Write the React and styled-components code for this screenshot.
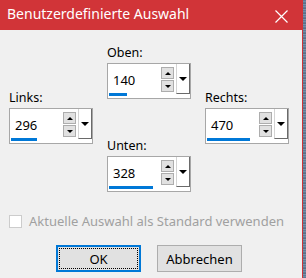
import React from 'react';
import styled, { createGlobalStyle } from 'styled-components';

let GlobalStyle = createGlobalStyle`
  html, body {
    margin: 0;
    padding: 0;
    height: 100%;
    overflow: hidden;
    background: #f0f0f0;
  }
  #root {
    height: 100%;
  }
`;

let Screen = styled.div`
  display: flex;
  height: 100%;
  font-family: "Noto Sans", "Open Sans", sans-serif;
`;

let Dialog = styled.div`
  width: 302px;
  border-right: 1px solid #d13438;
  background: #f0f0f0;
  display: flex;
  flex-direction: column;
`;

let Backdrop = styled.div`
  flex: 1;
  background: repeating-linear-gradient(
    180deg,
    #55708c 0px,
    #7b95b0 2px,
    #4a5e74 3px,
    #8aa2ba 5px
  );
`;

let TitleBar = styled.div`
  height: 30px;
  background: #d13438;
  color: white;
  display: flex;
  justify-content: space-between;
  align-items: flex-start;
  padding: 4px 0 0 7px;
  box-sizing: border-box;
`;

let Title = styled.div`
  font-size: 14px;
  line-height: 19px;
`;

let Close = styled.div`
  width: 42px;
  height: 20px;
  display: flex;
  justify-content: center;
  align-items: center;
  margin-top: 2px;
`;

let Body = styled.div`
  padding: 15px 0 0 9px;
  display: flex;
  flex-direction: column;
`;

let Fields = styled.div`
  display: flex;
  gap: 14px;
`;

let Column = styled.div`
  display: flex;
  flex-direction: column;
  gap: 39px;
  padding-top: ${props => props.$offset || 0}px;
`;

let Field = styled.div`
  display: flex;
  flex-direction: column;
  gap: 3px;
`;

let Label = styled.div`
  font-size: 12.5px;
  line-height: 15px;
  color: #000;
`;

let Box = styled.div`
  width: 84px;
  height: 36px;
  box-sizing: border-box;
  border: 1px solid #a7a7a7;
  background: white;
  display: flex;
`;

let TextArea = styled.div`
  flex: 1;
  display: flex;
  flex-direction: column;
`;

let Value = styled.div`
  flex: 1;
  display: flex;
  align-items: center;
  padding: 3px 0 0 5px;
  font-size: 13px;
  color: #000;
`;

let Bar = styled.div`
  height: 3px;
  width: ${props => props.$width}px;
  margin: 0 0 2px 1px;
  background: #0078d7;
`;

let Spinner = styled.div`
  display: flex;
  flex-direction: column;
  gap: 1px;
  padding-top: 3px;
  margin-right: 2px;
`;

let SpinButton = styled.div`
  width: 13px;
  height: 12px;
  box-sizing: border-box;
  border: 1px solid #adadad;
  background: #e1e1e1;
  display: flex;
  justify-content: center;
  align-items: center;
`;

let Drop = styled.div`
  width: 14px;
  height: 30px;
  box-sizing: border-box;
  border-left: 1px solid #d4d4d4;
  border-right: 1px solid #6a6a6a;
  border-bottom: 1px solid #6a6a6a;
  background: white;
  display: flex;
  justify-content: center;
  align-items: center;
`;

let CheckRow = styled.div`
  display: flex;
  align-items: center;
  gap: 7px;
  margin-top: 22px;
  font-size: 13px;
  line-height: 15px;
  color: #a0a0a0;
`;

let CheckBox = styled.div`
  width: 13px;
  height: 13px;
  box-sizing: border-box;
  border: 1px solid #cccccc;
  background: #ffffff;
`;

let Buttons = styled.div`
  display: flex;
  gap: 16px;
  margin: 16px 0 0 47px;
`;

let Button = styled.div`
  width: 85px;
  height: 27px;
  box-sizing: border-box;
  border: ${props => (props.$primary ? '2px solid #0078d7' : '1px solid #adadad')};
  background: #e1e1e1;
  display: flex;
  justify-content: center;
  align-items: center;
  font-size: 13px;
  color: #000;
  padding: ${props => (props.$primary ? '0' : '1px')};
`;

let Focus = styled.div`
  flex: 1;
  align-self: stretch;
  margin: 1px;
  border: 1px dotted #000;
  display: flex;
  justify-content: center;
  align-items: center;
`;

let Arrow = ({ up, w = 6, h = 3 }) => (
  <svg width={w} height={h} viewBox={`0 0 ${w} ${h}`}>
    <polygon
      points={up ? `0,${h} ${w},${h} ${w / 2},0` : `0,0 ${w},0 ${w / 2},${h}`}
      fill="#000"
    />
  </svg>
);

let NumberField = ({ label, value, bar }) => (
  <Field>
    <Label>{label}</Label>
    <Box>
      <TextArea>
        <Value>{value}</Value>
        <Bar $width={bar} />
      </TextArea>
      <Spinner>
        <SpinButton>
          <Arrow up />
        </SpinButton>
        <SpinButton>
          <Arrow />
        </SpinButton>
      </Spinner>
      <Drop>
        <Arrow w={8} h={4} />
      </Drop>
    </Box>
  </Field>
);

let App = () => {
  return (
    <Screen>
      <GlobalStyle />
      <Dialog>
        <TitleBar>
          <Title>Benutzerdefinierte Auswahl</Title>
          <Close>
            <svg width="13" height="13" viewBox="0 0 13 13">
              <path d="M0.5 0.5 L12.5 12.5 M12.5 0.5 L0.5 12.5" stroke="#fff" strokeWidth="1.2" />
            </svg>
          </Close>
        </TitleBar>
        <Body>
          <Fields>
            <Column $offset={45}>
              <NumberField label="Links:" value="296" bar={26} />
            </Column>
            <Column>
              <NumberField label="Oben:" value="140" bar={18} />
              <NumberField label="Unten:" value="328" bar={44} />
            </Column>
            <Column $offset={45}>
              <NumberField label="Rechts:" value="470" bar={43} />
            </Column>
          </Fields>
          <CheckRow>
            <CheckBox />
            <span>Aktuelle Auswahl als Standard verwenden</span>
          </CheckRow>
          <Buttons>
            <Button $primary>
              <Focus>OK</Focus>
            </Button>
            <Button>Abbrechen</Button>
          </Buttons>
        </Body>
      </Dialog>
      <Backdrop />
    </Screen>
  );
};

export default App;
